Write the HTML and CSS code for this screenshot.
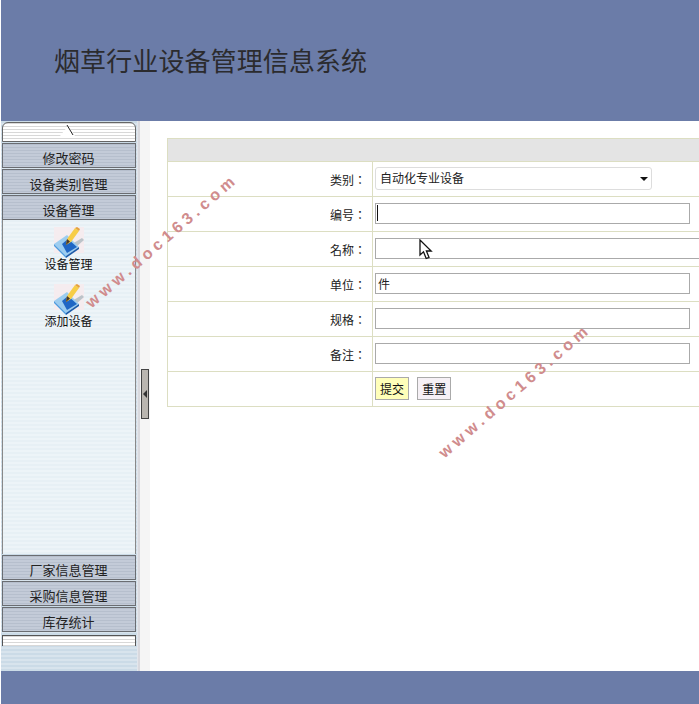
FILE: index.html
```html
<!DOCTYPE html>
<html lang="en">
<head>
    <meta charset="UTF-8">
    <title>烟草行业设备管理信息系统</title>
    <link rel="stylesheet" href="styles.css">
</head>
<body>

<div class="page">
    <div class="header">
        <h1>烟草行业设备管理信息系统</h1>
    </div>

    <div class="main">
        <div class="sidebar">
            <div class="panel">
                <div class="collapse-top">
                    <svg width="16" height="12" viewBox="0 0 16 12">
                        <path d="M0 11 L8 1 L15 11 Z" fill="#fff"/>
                        <path d="M7 0 L13 10" stroke="#222" stroke-width="1" fill="none"/>
                    </svg>
                </div>
                <div class="menu-title">修改密码</div>
                <div class="menu-title">设备类别管理</div>
                <div class="menu-title">设备管理</div>
                <div class="menu-body">
                    <div class="menu-item">
                        <svg class="item-icon" width="32" height="32" viewBox="0 0 32 32">
                            <rect x="1" y="0" width="30" height="26" fill="#f5ecef"/>
                            <path d="M19 17 L29 11 L31 13 L23 20 Z" fill="#bcc3c9"/>
                            <path d="M1 17 L14 8 L26 20 L13 29 Z" fill="#9ccdf0"/>
                            <path d="M9 17 L15 12 L24 20 L14 26 Z" fill="#1f66c4"/>
                            <path d="M1 17 L13 29 L13 31 L1 19 Z" fill="#4b9be0"/>
                            <path d="M13 29 L26 20 L26 22 L13 31 Z" fill="#1b5aa8"/>
                            <path d="M13 18 L14 12 L22 1 L26 4 L18 15 Z" fill="#f7cd48"/>
                            <path d="M13 18 L14 12 L17 14.5 Z" fill="#4a3a2a"/>
                            <path d="M22 1 L24 0 L27 2 L26 4 Z" fill="#e3a03c"/>
                        </svg>
                        <span>设备管理</span>
                    </div>
                    <div class="menu-item">
                        <svg class="item-icon" width="32" height="32" viewBox="0 0 32 32">
                            <rect x="1" y="0" width="30" height="26" fill="#f5ecef"/>
                            <path d="M19 17 L29 11 L31 13 L23 20 Z" fill="#bcc3c9"/>
                            <path d="M1 17 L14 8 L26 20 L13 29 Z" fill="#9ccdf0"/>
                            <path d="M9 17 L15 12 L24 20 L14 26 Z" fill="#1f66c4"/>
                            <path d="M1 17 L13 29 L13 31 L1 19 Z" fill="#4b9be0"/>
                            <path d="M13 29 L26 20 L26 22 L13 31 Z" fill="#1b5aa8"/>
                            <path d="M13 18 L14 12 L22 1 L26 4 L18 15 Z" fill="#f7cd48"/>
                            <path d="M13 18 L14 12 L17 14.5 Z" fill="#4a3a2a"/>
                            <path d="M22 1 L24 0 L27 2 L26 4 Z" fill="#e3a03c"/>
                        </svg>
                        <span>添加设备</span>
                    </div>
                </div>
                <div class="menu-title">厂家信息管理</div>
                <div class="menu-title">采购信息管理</div>
                <div class="menu-title">库存统计</div>
                <div class="collapse-bottom"></div>
            </div>
        </div>

        <div class="splitter">
            <div class="handle"><span class="handle-arrow"></span></div>
        </div>

        <div class="content">
            <table class="form-table">
                <colgroup>
                    <col class="col-label">
                    <col class="col-field">
                </colgroup>
                <tr class="head-row"><td colspan="2"></td></tr>
                <tr>
                    <td class="label">类别：</td>
                    <td class="field">
                        <div class="select-wrap">
                            <select class="type-select">
                                <option>自动化专业设备</option>
                            </select>
                        </div>
                    </td>
                </tr>
                <tr>
                    <td class="label">编号：</td>
                    <td class="field"><input type="text" class="text-input"><span class="caret"></span></td>
                </tr>
                <tr>
                    <td class="label">名称：</td>
                    <td class="field"><input type="text" class="text-input wide"></td>
                </tr>
                <tr>
                    <td class="label">单位：</td>
                    <td class="field"><input type="text" class="text-input" value="件"></td>
                </tr>
                <tr>
                    <td class="label">规格：</td>
                    <td class="field"><input type="text" class="text-input"></td>
                </tr>
                <tr>
                    <td class="label">备注：</td>
                    <td class="field"><input type="text" class="text-input"></td>
                </tr>
                <tr>
                    <td class="label"></td>
                    <td class="field">
                        <button class="btn btn-submit">提交</button>
                        <button class="btn btn-reset">重置</button>
                    </td>
                </tr>
            </table>
        </div>

        <div class="watermark mark-one">www.doc163.com</div>
        <div class="watermark mark-two">www.doc163.com</div>
        <svg class="pointer" width="14" height="21" viewBox="0 0 14 21">
            <path d="M1 1 L1 16 L4.5 12.8 L7.2 19.5 L10 18.3 L7.4 12 L12.2 12 Z" fill="#fff" stroke="#111" stroke-width="1.3"/>
        </svg>
    </div>

    <div class="footer"></div>
</div>

</body>
</html>
```

FILE: styles.css
```css
html, body {
    margin: 0;
    padding: 0;
    background: #fff;
    overflow: hidden;
}

body {
    font-family: "Liberation Sans", "Noto Sans CJK SC", sans-serif;
    font-size: 12px;
    color: #222;
}

.page {
    width: 699px;
    height: 704px;
    display: flex;
    flex-direction: column;
    overflow: hidden;
}

.header {
    height: 121px;
    margin-left: 1px;
    background: #6b7ca8;
    padding: 0 0 2px 53px;
    box-sizing: border-box;
    display: flex;
    align-items: center;
    flex-shrink: 0;
}

.header h1 {
    margin: 0;
    font-size: 26px;
    font-weight: normal;
    letter-spacing: 0.1px;
    color: #2b2b2e;
}

.main {
    position: relative;
    height: 550px;
    display: flex;
    flex-shrink: 0;
}

.footer {
    height: 33px;
    margin-left: 1px;
    background: #6b7ca8;
}

/* sidebar */
.sidebar {
    width: 136px;
    margin-left: 1px;
    flex-shrink: 0;
    background: repeating-linear-gradient(to bottom, #cbdbe7 0, #cbdbe7 2px, #d8e4ed 2px, #d8e4ed 4px);
}

.panel {
    margin-left: 1px;
    width: 134px;
    display: flex;
    flex-direction: column;
}

.collapse-top {
    height: 20px;
    margin-top: 1px;
    border: 1px solid #666;
    border-radius: 6px 6px 0 0;
    box-sizing: border-box;
    background: repeating-linear-gradient(to bottom, #d8d8d8 0, #d8d8d8 1px, #fff 1px, #fff 3px);
    display: flex;
    justify-content: center;
    align-items: flex-end;
    padding: 0 2px 4px 0;
}

.menu-title {
    height: 25px;
    margin-top: 1px;
    padding-right: 1px;
    border: 1px solid #6a6d72;
    box-sizing: border-box;
    background: repeating-linear-gradient(to bottom, #b6bfcd 0, #b6bfcd 1px, #c3cbd8 1px, #c3cbd8 3px);
    text-align: center;
    font-size: 13px;
    line-height: 29px;
    color: #222;
    overflow: hidden;
}

.menu-body {
    height: 334px;
    border-left: 1px solid #888;
    border-right: 1px solid #888;
    box-sizing: border-box;
    background: repeating-linear-gradient(to bottom, #e7f0f5 0, #e7f0f5 2px, #edf4f8 2px, #edf4f8 4px);
    padding-top: 7px;
}

.menu-item {
    display: flex;
    flex-direction: column;
    align-items: center;
    height: 57px;
    padding-right: 1px;
    line-height: 14px;
    color: #111;
}

.item-icon {
    margin-bottom: -1px;
}

.collapse-bottom {
    height: 11px;
    margin-top: 3px;
    border: 1px solid #555;
    border-bottom: 0;
    box-sizing: border-box;
    background: repeating-linear-gradient(to bottom, #d8d8d8 0, #d8d8d8 1px, #fff 1px, #fff 3px);
}

/* splitter between menu and form */
.splitter {
    width: 13px;
    flex-shrink: 0;
    background: linear-gradient(to right, #e2e6ec 0, #e2e6ec 1px, #d9d9de 1px, #d9d9de 3px, #f5f5f5 3px);
    padding-top: 248px;
    box-sizing: border-box;
}

.handle {
    width: 8px;
    height: 50px;
    margin-left: 4px;
    border: 1px solid #444;
    box-sizing: border-box;
    background: #bab6b0;
    display: flex;
    align-items: center;
}

.handle-arrow {
    width: 0;
    height: 0;
    border-top: 4px solid transparent;
    border-bottom: 4px solid transparent;
    border-right: 4px solid #333;
    margin-left: 1px;
}

/* form */
.content {
    flex: 1;
    padding: 17px 0 0 17px;
    overflow: hidden;
}

.form-table {
    width: 560px;
    border-collapse: collapse;
    table-layout: fixed;
}

.col-label {
    width: 205px;
}

.form-table td {
    border: 1px solid #dcdec2;
    height: 35px;
    padding: 0;
    box-sizing: border-box;
}

.form-table .head-row td {
    height: 23px;
    background: #e4e4e4;
}

.label {
    text-align: right;
    padding-right: 6px !important;
    font-family: "Liberation Sans", "Noto Sans CJK TC", sans-serif;
    color: #222;
}

.form-table .field {
    padding: 0 0 2px 2px;
    position: relative;
}

.select-wrap {
    position: relative;
    width: 277px;
}

.select-wrap::after {
    content: "";
    position: absolute;
    right: 4px;
    top: 10px;
    border-left: 4px solid transparent;
    border-right: 4px solid transparent;
    border-top: 4px solid #111;
}

.type-select {
    display: block;
    width: 277px;
    height: 23px;
    padding: 2px 0 0 4px;
    font: 12px "Liberation Sans", "Noto Sans CJK SC", sans-serif;
    color: #222;
    background: #fff;
    border: 1px solid #ddd;
    border-radius: 3px;
    appearance: none;
}

.text-input {
    display: block;
    width: 315px;
    height: 21px;
    box-sizing: border-box;
    padding: 0 2px;
    border: 1px solid #aaa;
    font: 12px "Liberation Sans", "Noto Sans CJK SC", sans-serif;
    color: #222;
    background: #fff;
    outline: none;
}

.text-input.wide {
    width: 340px;
}

.caret {
    position: absolute;
    left: 4px;
    top: 8px;
    width: 1px;
    height: 16px;
    background: #111;
}

.btn {
    width: 34px;
    height: 23px;
    padding: 0;
    border: 1px solid #aaa;
    font: 12px "Liberation Sans", "Noto Sans CJK SC", sans-serif;
    color: #111;
}

.btn-submit {
    background: #ffffb9;
    margin-right: 5px;
}

.btn-reset {
    background: #f6f1f6;
}

/* overlays */
.watermark {
    position: absolute;
    width: 200px;
    text-align: center;
    font-family: "Liberation Sans", sans-serif;
    font-size: 16px;
    font-weight: bold;
    letter-spacing: 4.4px;
    line-height: 20px;
    color: #d08c8d;
    white-space: nowrap;
    transform: rotate(-41deg);
}

.mark-one {
    left: 62px;
    top: 110px;
}

.mark-two {
    left: 415px;
    top: 260px;
}

.pointer {
    position: absolute;
    left: 419px;
    top: 118px;
}
```
